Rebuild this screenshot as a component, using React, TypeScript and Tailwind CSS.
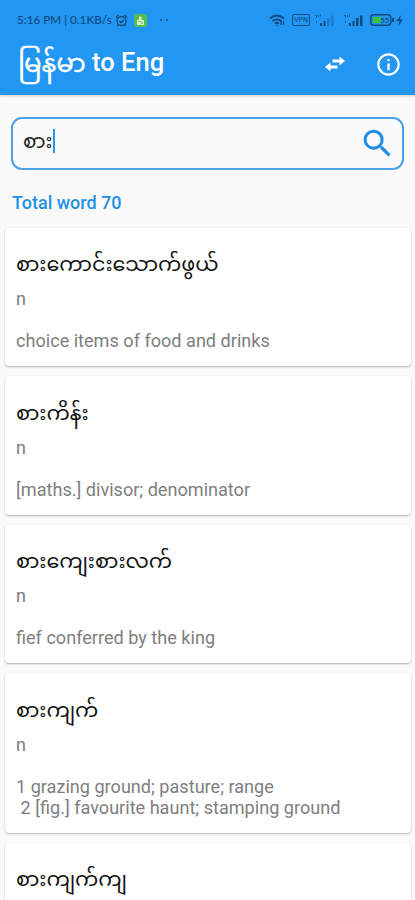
import React from "react";
import { MdInfoOutline, MdSearch } from "react-icons/md";

const entries = [
  { word: "စားကောင်းသောက်ဖွယ်", type: "n", lines: ["choice items of food and drinks"] },
  { word: "စားကိန်း", type: "n", lines: ["[maths.] divisor; denominator"] },
  { word: "စားကျေးစားလက်", type: "n", lines: ["fief conferred by the king"] },
  {
    word: "စားကျက်",
    type: "n",
    lines: ["1 grazing ground; pasture; range", " 2 [fig.] favourite haunt; stamping ground"],
  },
  { word: "စားကျက်ကျ", type: "", lines: [] },
];

function SignalBars({ faded }: { faded?: boolean }) {
  return (
    <svg width="21" height="12" viewBox="0 0 21 12" fill="#124a7c">
      <path d="M0 1h2v1H0zM1 2h1v2H1zM3 1h1v2H3zM5 0h1v3H5zM1 7h1v2H1z" opacity="0.7" />
      <path d="M5 9h2v3H5zM8.500 7h2v5h-2z" />
      <path d="M12 4h2.500v8H12zM16 1.500h2.500V12H16z" opacity={faded ? 0.3 : 1} />
    </svg>
  );
}

function StatusBar() {
  return (
    <div className="flex h-10 items-center pl-[17px] pr-[11px] text-[#124a7c]">
      <span className="w-[97px] whitespace-nowrap font-['Lato',sans-serif] text-[11.7px] font-medium leading-none">
        5:16 PM | 0.1KB/s
      </span>
      <svg className="ml-[1px]" width="13" height="13" viewBox="0 0 13 13" fill="none" stroke="currentColor" strokeWidth="1.3">
        <circle cx="6.5" cy="7" r="4.500" />
        <path d="M1 3.500 3.500 1M12 3.500 9.500 1M4.500 7l1.500 1.500L9 6M3 11l-1 1M10 11l1 1" />
      </svg>
      <svg className="ml-[6px]" width="13" height="13" viewBox="0 0 13 13">
        <rect width="13" height="13" rx="3" fill="#55bd4d" />
        <path d="M3 6h7v5H3zM5 6V2.500h2.500V6" fill="#d7f0c8" />
        <path d="M4.500 7.500h2M7 9h2" stroke="#55bd4d" />
      </svg>
      <span className="ml-[13px] flex gap-1">
        <i className="h-[2px] w-[2px] rounded-full bg-[#124a7c]" />
        <i className="h-[2px] w-[2px] rounded-full bg-[#124a7c]" />
      </span>
      <div className="ml-auto flex items-center">
        <svg width="17" height="13" viewBox="0 0 17 13" fill="none" stroke="currentColor" strokeWidth="1.800">
          <path d="M1 4.500q7-6 14 0M3.500 7.300q4.500-3.800 9 0M6 9.600q2-1.600 4 0" />
          <path d="M8 12v-1M12 11V7M14.500 7v4" strokeWidth="1.300" />
        </svg>
        <span className="ml-[6px] grid h-3 w-[18px] place-items-center rounded-[2px] border border-current font-['Roboto',sans-serif] text-[7px] leading-none">
          VPN
        </span>
        <span className="ml-[5px]">
          <SignalBars faded />
        </span>
        <span className="ml-[8px]">
          <SignalBars />
        </span>
        <svg className="ml-[5px]" width="34" height="12" viewBox="0 0 34 12">
          <rect x="0.800" y="0.800" width="20" height="10.400" rx="3" fill="none" stroke="#124a7c" strokeWidth="1.500" />
          <rect x="3" y="3" width="8" height="6" rx="1" fill="#3fc23b" />
          <text x="10" y="9" fontSize="8" fontFamily="Roboto, sans-serif" fill="#124a7c">55</text>
          <path d="M22 4h2v4h-2z" fill="#124a7c" />
          <path d="M31 1l-4.500 6h3l-1 4.500L33 5.500h-3z" fill="#124a7c" />
        </svg>
      </div>
    </div>
  );
}

export default function App() {
  return (
    <main className="flex h-[900px] w-full flex-col overflow-hidden bg-[#fafafa] font-['Roboto','Noto_Sans_Myanmar',sans-serif]">
      <header className="h-[95px] shrink-0 bg-[#2196f3] shadow-[0_1px_3px_rgba(0,0,0,0.2)]">
        <StatusBar />
        <div className="flex h-12 items-center pl-[18px] pr-[13px] text-white">
          <h1 className="flex items-center whitespace-pre pb-[3px] text-[25.5px] font-medium leading-none">
            <span className="text-[26px] font-normal [-webkit-text-stroke:0.3px_white]">မြန်မာ</span>
            <span> to Eng</span>
          </h1>
          <button type="button" aria-label="Swap languages" className="ml-auto">
            <svg width="20" height="16" viewBox="0 0 20 16" fill="currentColor">
              <path d="M7.500 3.500h7V.500L20 5l-5.500 4.500v-3h-7zM12.500 12.500h-7v3L0 11l5.500-4.500v3h7z" />
            </svg>
          </button>
          <button type="button" aria-label="About" className="ml-[30px]">
            <MdInfoOutline size={27} />
          </button>
        </div>
      </header>

      <div className="mx-[11px] mt-[22px] flex h-[53px] shrink-0 items-center rounded-[11px] border-2 border-[#4f9fe6] pl-[10px] pr-[6px]">
        <span className="pb-[6px] text-[20px] leading-none text-[#222]">စား</span>
        <span className="mb-[5px] h-6 w-[2px] bg-[#2196f3]" />
        <MdSearch size={37} className="ml-auto text-[#1e8de6]" />
      </div>

      <p className="mt-[21px] h-6 shrink-0 pl-3 text-[18px] font-medium leading-6 text-[#2390e8]">Total word 70</p>

      <section className="mt-[12.5px] flex flex-col gap-[10px] pl-[5px] pr-1">
        {entries.map((entry) => (
          <article
            key={entry.word}
            className="shrink-0 rounded-[4px] bg-white px-[11px] pb-[15px] pt-[20.500px] shadow-[0_1px_2px_rgba(0,0,0,0.3)]"
          >
            <h2 className="h-[40px] whitespace-nowrap text-[20.7px] leading-[32px] text-[#111]">{entry.word}</h2>
            {entry.type && <p className="h-[22px] text-[18px] leading-[22px] text-[#7e7e7e]">{entry.type}</p>}
            {entry.lines.length > 0 && (
              <div className="mt-[20px] whitespace-pre text-[18.1px] leading-[21px] text-[#7e7e7e]">
                {entry.lines.map((line) => (
                  <p key={line}>{line}</p>
                ))}
              </div>
            )}
          </article>
        ))}
      </section>
    </main>
  );
}
